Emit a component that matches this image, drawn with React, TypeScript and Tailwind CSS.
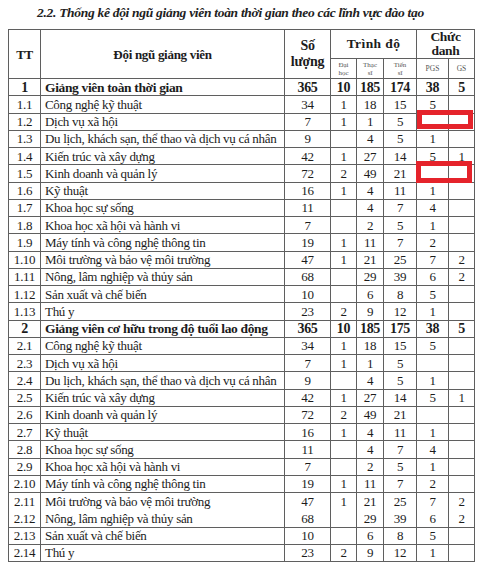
type Row = {
  tt: string;
  name: string;
  vals: (string | number)[];
  bold?: boolean;
  joinNext?: boolean;
  joinPrev?: boolean;
};

const rows: Row[] = [
  { tt: '1', name: 'Giảng viên toàn thời gian', vals: [365, 10, 185, 174, 38, 5], bold: true },
  { tt: '1.1', name: 'Công nghệ kỹ thuật', vals: [34, 1, 18, 15, 5, ''] },
  { tt: '1.2', name: 'Dịch vụ xã hội', vals: [7, 1, 1, 5, '', ''] },
  { tt: '1.3', name: 'Du lịch, khách sạn, thể thao và dịch vụ cá nhân', vals: [9, '', 4, 5, 1, ''] },
  { tt: '1.4', name: 'Kiến trúc và xây dựng', vals: [42, 1, 27, 14, 5, 1] },
  { tt: '1.5', name: 'Kinh doanh và quản lý', vals: [72, 2, 49, 21, '', ''] },
  { tt: '1.6', name: 'Kỹ thuật', vals: [16, 1, 4, 11, 1, ''] },
  { tt: '1.7', name: 'Khoa học sự sống', vals: [11, '', 4, 7, 4, ''] },
  { tt: '1.8', name: 'Khoa học xã hội và hành vi', vals: [7, '', 2, 5, 1, ''] },
  { tt: '1.9', name: 'Máy tính và công nghệ thông tin', vals: [19, 1, 11, 7, 2, ''] },
  { tt: '1.10', name: 'Môi trường và bảo vệ môi trường', vals: [47, 1, 21, 25, 7, 2] },
  { tt: '1.11', name: 'Nông, lâm nghiệp và thủy sản', vals: [68, '', 29, 39, 6, 2] },
  { tt: '1.12', name: 'Sản xuất và chế biến', vals: [10, '', 6, 8, 5, ''] },
  { tt: '1.13', name: 'Thú y', vals: [23, 2, 9, 12, 1, ''] },
  { tt: '2', name: 'Giảng viên cơ hữu trong độ tuổi lao động', vals: [365, 10, 185, 175, 38, 5], bold: true },
  { tt: '2.1', name: 'Công nghệ kỹ thuật', vals: [34, 1, 18, 15, 5, ''] },
  { tt: '2.3', name: 'Dịch vụ xã hội', vals: [7, 1, 1, 5, '', ''] },
  { tt: '2.4', name: 'Du lịch, khách sạn, thể thao và dịch vụ cá nhân', vals: [9, '', 4, 5, 1, ''] },
  { tt: '2.5', name: 'Kiến trúc và xây dựng', vals: [42, 1, 27, 14, 5, 1] },
  { tt: '2.6', name: 'Kinh doanh và quản lý', vals: [72, 2, 49, 21, '', ''] },
  { tt: '2.7', name: 'Kỹ thuật', vals: [16, 1, 4, 11, 1, ''] },
  { tt: '2.8', name: 'Khoa học sự sống', vals: [11, '', 4, 7, 4, ''] },
  { tt: '2.9', name: 'Khoa học xã hội và hành vi', vals: [7, '', 2, 5, 1, ''] },
  { tt: '2.10', name: 'Máy tính và công nghệ thông tin', vals: [19, 1, 11, 7, 2, ''] },
  { tt: '2.11', name: 'Môi trường và bảo vệ môi trường', vals: [47, 1, 21, 25, 7, 2], joinNext: true },
  { tt: '2.12', name: 'Nông, lâm nghiệp và thủy sản', vals: [68, '', 29, 39, 6, 2], joinPrev: true },
  { tt: '2.13', name: 'Sản xuất và chế biến', vals: [10, '', 6, 8, 5, ''] },
  { tt: '2.14', name: 'Thú y', vals: [23, 2, 9, 12, 1, ''] },
];

export default function App() {
  return (
    <div className="w-[480px] h-[572px] bg-white text-[#1c1c1c] overflow-hidden font-[family-name:Liberation_Serif,Times_New_Roman,serif]">
      <h2 className="pt-[3px] pl-[37px] text-[13.5px] leading-[20px] font-bold italic tracking-[-0.3px] whitespace-nowrap text-[#222]">
        2.2. Thống kê đội ngũ giảng viên toàn thời gian theo các lĩnh vực đào tạo
      </h2>

      <div className="relative ml-[8px] mt-[6px] w-[466px]">
        <table className="table-fixed border-collapse w-[466px] text-[13px] tracking-[-0.3px]">
          <colgroup>
            <col className="w-[32px]" />
            <col className="w-[244px]" />
            <col className="w-[46px]" />
            <col className="w-[26px]" />
            <col className="w-[27px]" />
            <col className="w-[33px]" />
            <col className="w-[32px]" />
            <col className="w-[26px]" />
          </colgroup>
          <thead>
            <tr className="h-[29px]">
              <th rowSpan={2} className="border border-[#5f5f5f] font-bold text-[13px] pt-[2px]">TT</th>
              <th rowSpan={2} className="border border-[#5f5f5f] font-bold text-[13px] pt-[2px]">Đội ngũ giảng viên</th>
              <th rowSpan={2} className="border border-[#5f5f5f] font-bold text-[14px] leading-[16px]">
                Số
                <br />
                lượng
              </th>
              <th colSpan={3} className="border border-[#5f5f5f] font-bold text-[13.5px] tracking-[0.4px] pt-[1px]">Trình độ</th>
              <th colSpan={2} className="border border-[#5f5f5f] font-bold text-[13.5px] leading-[14px]">
                Chức
                <br />
                danh
              </th>
            </tr>
            <tr className="h-[20px]">
              {['Đại|học', 'Thạc|sĩ', 'Tiến|sĩ'].map((s) => (
                <th key={s} className="border border-[#5f5f5f] font-normal text-[7px] leading-[8px] text-[#555] tracking-normal">
                  {s.split('|')[0]}
                  <br />
                  {s.split('|')[1]}
                </th>
              ))}
              <th className="border border-[#5f5f5f] font-normal text-[7.5px] text-[#555] tracking-normal">PGS</th>
              <th className="border border-[#5f5f5f] font-normal text-[7.5px] text-[#555] tracking-normal">GS</th>
            </tr>
          </thead>
          <tbody>
            {rows.map((r) => {
              const edge = r.joinNext ? 'border-b-0' : r.joinPrev ? 'border-t-0' : '';
              const cell = `border border-[#5f5f5f] ${edge} p-0 leading-[15px]`;
              return (
                <tr key={r.tt} className="h-[17.25px]">
                  <td className={`${cell} text-center ${r.bold ? 'font-bold text-[14px]' : ''}`}>{r.tt}</td>
                  <td className={`${cell} pl-[4px] whitespace-nowrap ${r.bold ? 'font-bold text-[13.5px] tracking-[-0.35px]' : ''}`}>
                    {r.name}
                  </td>
                  {r.vals.map((v, i) => (
                    <td key={i} className={`${cell} text-center ${r.bold ? 'font-bold text-[14px]' : ''}`}>
                      {v}
                    </td>
                  ))}
                </tr>
              );
            })}
          </tbody>
        </table>

        <div className="absolute left-[409px] top-[81px] w-[56px] h-[19px] border-[5px] border-[#e5232b]" />
        <div className="absolute left-[408px] top-[132px] w-[56px] h-[22px] border-[5px] border-[#e5232b]" />
      </div>
    </div>
  );
}
